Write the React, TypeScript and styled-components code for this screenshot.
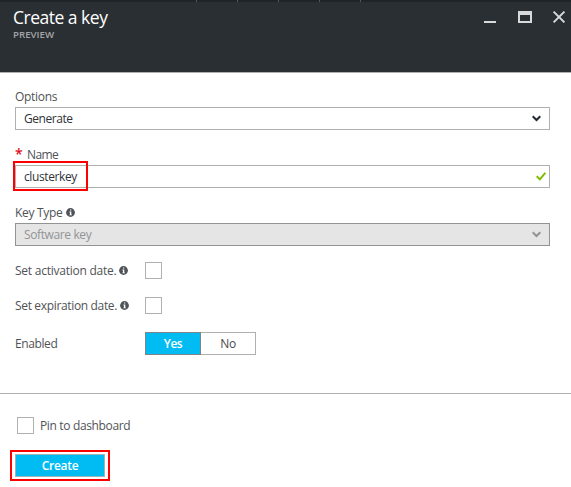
import React from "react";
import styled, { createGlobalStyle } from "styled-components";

const Global = createGlobalStyle`
  * { box-sizing: border-box; }
  body { margin: 0; background: #fff; font-family: "Open Sans", "Noto Sans", sans-serif; font-size: 12px; color: #505356; }
`;

const Blade = styled.main`
  width: 571px;
  height: 487px;
  overflow: hidden;
  background: #fff;
`;

const TopStrip = styled.div`
  height: 2px;
  padding-left: 196px;
  display: flex;
  gap: 40px;
  background: #202428;
`;

const Tick = styled.i`
  width: 1px;
  height: 2px;
  background: #54585c;
`;

const Header = styled.header`
  height: 71px;
  padding: 4px 5px 0 13px;
  display: flex;
  justify-content: space-between;
  background: #2a2f33;
  border-bottom: 1px solid #aeb0b1;
`;

const Title = styled.h1`
  margin: 0;
  font-size: 17.5px;
  line-height: 22px;
  font-weight: 400;
  color: #fff;
  white-space: nowrap;
  letter-spacing: -0.5px;
`;

const Subtitle = styled.div`
  font-size: 9.7px;
  line-height: 12px;
  margin-top: 1px;
  font-weight: 600;
  color: #a3a5a7;
  letter-spacing: 0;
`;

const WindowControls = styled.svg`
  display: block;
  margin-top: 3px;
`;

const Form = styled.section`
  height: 321px;
  padding: 14px 21px 0 15px;
  border-bottom: 1px solid #b0b0b0;
`;

const Text = styled.span<{ $track?: number; $bold?: boolean }>`
  white-space: nowrap;
  line-height: 18px;
  letter-spacing: ${(p) => p.$track ?? -0.3}px;
  font-weight: ${(p) => (p.$bold ? 600 : 400)};
`;

const Label = styled.div<{ $gap?: number }>`
  display: flex;
  align-items: center;
  height: 20px;
  gap: ${(p) => p.$gap ?? 3}px;
`;

const Star = styled.span`
  color: #e00b1c;
  font-size: 14px;
  font-weight: 600;
  line-height: 18px;
  width: 7px;
  padding-bottom: 2px;
`;

const Field = styled.div<{ $disabled?: boolean }>`
  position: relative;
  height: 23px;
  padding: 0 3px 0 8px;
  display: flex;
  align-items: center;
  justify-content: space-between;
  color: ${(p) => (p.$disabled ? "#929496" : "#2f3338")};
  background: ${(p) => (p.$disabled ? "#e5e5e5" : "#fff")};
  border: 1px solid ${(p) => (p.$disabled ? "#919394" : "#b0b0b0")};
`;

const FieldGroup = styled.div<{ $last?: boolean }>`
  height: ${(p) => (p.$last ? 50 : 58)}px;
`;

const Highlight = styled.div<{ $x: number; $y: number; $w: number; $h: number }>`
  position: absolute;
  left: ${(p) => p.$x}px;
  top: ${(p) => p.$y}px;
  width: ${(p) => p.$w}px;
  height: ${(p) => p.$h}px;
  border: 2px solid #fe0000;
  pointer-events: none;
`;

const Row = styled.div<{ $h: number }>`
  display: grid;
  grid-template-columns: 130px auto;
  justify-content: start;
  align-items: center;
  height: ${(p) => p.$h}px;
`;

const Checkbox = styled.span`
  display: block;
  width: 17px;
  height: 17px;
  background: #fff;
  border: 1px solid #b0b0b0;
`;

const Toggle = styled.div`
  display: grid;
  grid-template-columns: 56px 55px;
  height: 23px;
`;

const Choice = styled.div<{ $on?: boolean }>`
  display: flex;
  align-items: center;
  justify-content: center;
  border: 1px solid ${(p) => (p.$on ? "#7f8489" : "#b0b0b0")};
  border-left-width: ${(p) => (p.$on ? 1 : 0)}px;
  background: ${(p) => (p.$on ? "#00bcf2" : "#fff")};
  color: ${(p) => (p.$on ? "#fff" : "#474a4d")};
`;

const Footer = styled.footer`
  padding: 23px 0 0 15px;
`;

const PinRow = styled.div`
  display: flex;
  align-items: center;
  gap: 6px;
  height: 17px;
  margin: 0 0 20px 2px;
`;

const CreateButton = styled.div`
  position: relative;
  width: 90px;
  height: 23px;
  display: flex;
  align-items: center;
  justify-content: center;
  color: #fff;
  background: #00bcf2;
  border: 1px solid #a4b4ba;
`;

const Icon = styled.svg`
  display: block;
  flex: none;
`;

const Chevron = styled(Icon)`
  margin-right: 5px;
`;

const InfoIcon = styled(Icon)`
  margin-bottom: 1px;
`;

const Info = () => (
  <InfoIcon width="9" height="9" viewBox="0 0 9 9">
    <circle cx="4.5" cy="4.5" r="4.4" fill="#505458" />
    <path d="M4 1.4h1.3v1.2H4zM3.4 3.5h1.9v2.9h.6v.9H3.4v-.9H4v-2h-.6z" fill="#fff" />
  </InfoIcon>
);

const Down = ({ color }: { color: string }) => (
  <Chevron width="9" height="7" viewBox="0 0 9 7">
    <path d="M.7 1.2 4.5 5 8.3 1.2" fill="none" stroke={color} strokeWidth="2.1" />
  </Chevron>
);

export default function App() {
  return (
    <Blade>
      <Global />
      <TopStrip>
        {[0, 1, 2, 3, 4].map((n) => (
          <Tick key={n} />
        ))}
      </TopStrip>
      <Header>
        <div>
          <Title>Create a key</Title>
          <Subtitle>PREVIEW</Subtitle>
        </div>
        <WindowControls width="82" height="16" viewBox="0 0 82 16" fill="none">
          <path d="M0 12h12v2H0z" fill="#d8d9da" />
          <path d="M34 2h14v12H34zM36 6v6h10V6z" fill="#d8d9da" fillRule="evenodd" />
          <path d="m69.6 2.6 10.8 10.8m0-10.8L69.6 13.4" stroke="#d8d9da" strokeWidth="2" />
        </WindowControls>
      </Header>
      <Form>
        <FieldGroup>
          <Label><Text>Options</Text></Label>
          <Field><Text $track={-0.45}>Generate</Text><Down color="#252a30" /></Field>
        </FieldGroup>
        <FieldGroup>
          <Label $gap={5}><Star>*</Star><Text $track={-0.6}>Name</Text></Label>
          <Field>
            <Text $track={-0.4}>clusterkey</Text>
            <Icon width="10" height="9" viewBox="0 0 10 9">
              <path d="M.7 4.3 3.9 7.4 9.3.8" fill="none" stroke="#7fba00" strokeWidth="2" />
            </Icon>
            <Highlight $x={-3} $y={-5} $w={75} $h={30} />
          </Field>
        </FieldGroup>
        <FieldGroup $last>
          <Label><Text>Key Type</Text><Info /></Label>
          <Field $disabled><Text $track={-0.38}>Software key</Text><Down color="#929496" /></Field>
        </FieldGroup>
        <Row $h={35}><Label><Text $track={-0.24}>Set activation date.</Text><Info /></Label><Checkbox /></Row>
        <Row $h={35}><Label><Text $track={-0.34}>Set expiration date.</Text><Info /></Label><Checkbox /></Row>
        <Row $h={41}>
          <Text $track={-0.4}>Enabled</Text>
          <Toggle>
            <Choice $on><Text $bold $track={-0.5}>Yes</Text></Choice>
            <Choice><Text>No</Text></Choice>
          </Toggle>
        </Row>
      </Form>
      <Footer>
        <PinRow><Checkbox /><Text $track={-0.35}>Pin to dashboard</Text></PinRow>
        <CreateButton>
          <Text $bold>Create</Text>
          <Highlight $x={-6} $y={-5} $w={100} $h={31} />
        </CreateButton>
      </Footer>
    </Blade>
  );
}
